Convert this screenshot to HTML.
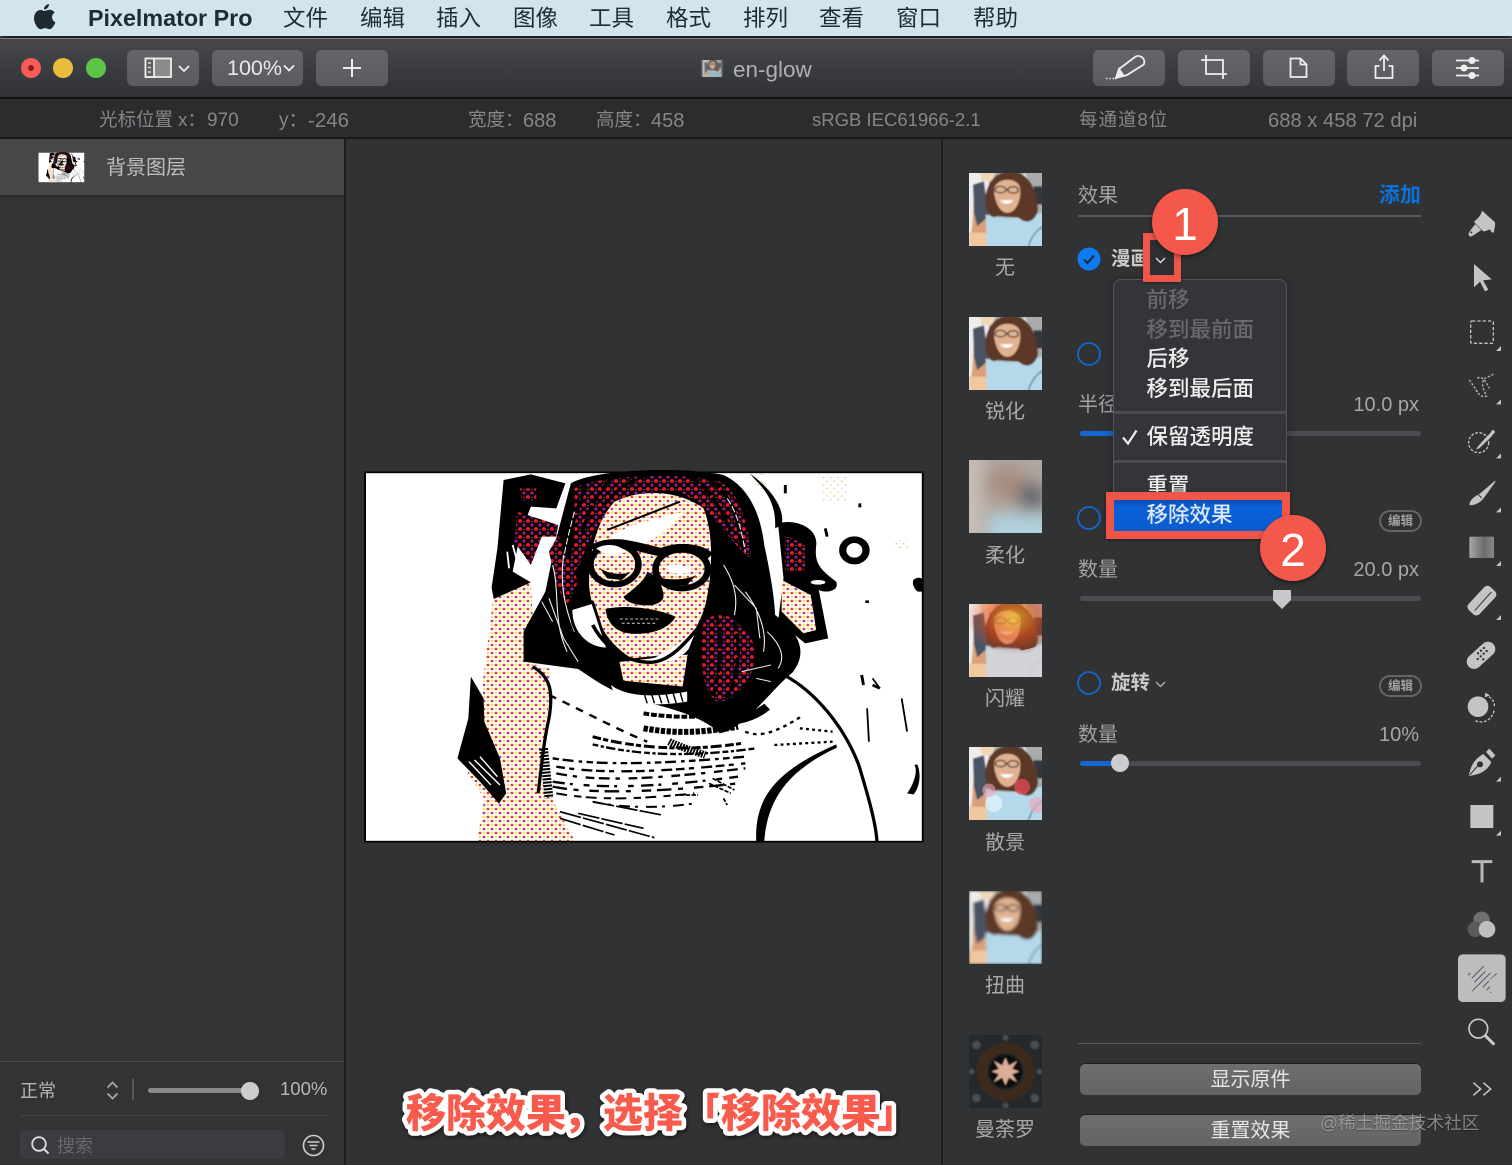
<!DOCTYPE html>
<html lang="zh"><head><meta charset="utf-8"><title>Pixelmator Pro</title>
<style>
html,body{margin:0;padding:0;background:#313234}
body{position:relative;width:1512px;height:1165px;overflow:hidden;font-family:"Liberation Sans","Noto Sans CJK SC",sans-serif}
.b{position:absolute}
.t{position:absolute;white-space:nowrap;line-height:1}
.btn{position:absolute;top:50px;height:36px;background:linear-gradient(#636568,#595b5e);border-radius:6px}
.m{font-size:22.5px;color:#1f2c35;top:8px}
.s{font-size:18.5px;color:#858688;top:110.5px}
.l{font-size:20px;color:#a8a9aa;text-align:center;left:965px;width:80px}
.th{position:absolute;left:969px;width:73px;height:73px}
.v{font-size:20px;color:#a5a6a8;right:93px}
.h{font-size:20px;color:#a2a3a5;left:1078px}
.mi{font-size:21.5px;left:1146.5px;color:#eeeeef;font-weight:500}
.dis{color:#68696b}
.sl{position:absolute;left:1080px;width:341px;height:5px;background:#4b4c4f;border-radius:3px}
.pill{position:absolute;left:1379px;width:39px;height:18px;border:2px solid #646567;border-radius:11px;color:#a0a1a3;font-size:12.5px;font-weight:700;line-height:18px;text-align:center}
.gb{position:absolute;left:1080px;width:341px;height:31px;background:linear-gradient(#6d6e70,#636466);border-radius:5px;box-shadow:0 -1px 0 #1e1f21;color:#e6e6e7;font-size:20px;line-height:33px;text-align:center}
.num{position:absolute;width:66px;height:66px;border-radius:50%;background:#f4584a;box-shadow:0 2px 5px rgba(0,0,0,.45);color:#fff;font-size:46px;line-height:70px;text-align:center}
</style></head><body>

<svg width="0" height="0" style="position:absolute">
<defs>
<pattern id="skin" width="22" height="24" patternUnits="userSpaceOnUse">
<rect width="22" height="24" fill="#fffdf0"/>
<circle cx="0" cy="0" r="3.800" fill="#e2352f"/><circle cx="22" cy="0" r="3.800" fill="#e2352f"/><circle cx="0" cy="24" r="3.800" fill="#e2352f"/><circle cx="22" cy="24" r="3.800" fill="#e2352f"/>
<circle cx="11" cy="12" r="3.800" fill="#b5309a"/>
<circle cx="11" cy="0" r="3.800" fill="#fbdf70"/><circle cx="11" cy="24" r="3.800" fill="#fbdf70"/><circle cx="0" cy="12" r="3.800" fill="#fbdf70"/><circle cx="22" cy="12" r="3.800" fill="#fbdf70"/>
</pattern>
<pattern id="hair" width="22" height="24" patternUnits="userSpaceOnUse">
<rect width="22" height="24" fill="#0c0208"/>
<circle cx="0" cy="0" r="5.500" fill="#e01a2a"/><circle cx="22" cy="0" r="5.500" fill="#e01a2a"/><circle cx="0" cy="24" r="5.500" fill="#e01a2a"/><circle cx="22" cy="24" r="5.500" fill="#e01a2a"/>
<circle cx="11" cy="12" r="4.500" fill="#9a1e8a"/><circle cx="11" cy="0" r="2" fill="#e8d070"/>
</pattern>
<pattern id="tiny" width="20" height="22" patternUnits="userSpaceOnUse"><circle cx="5" cy="5" r="3" fill="#f4dc90"/><circle cx="15" cy="16" r="2.500" fill="#e8c0d0"/></pattern>
<symbol id="comic" viewBox="0 0 1568 1155" preserveAspectRatio="none">
<rect x="14" y="22" width="1534" height="1108" fill="#fff"/>
<rect x="1270" y="30" width="70" height="80" fill="url(#tiny)"/>
<rect x="1090" y="25" width="20" height="50" fill="url(#tiny)"/>
<rect x="1470" y="225" width="40" height="25" fill="url(#tiny)"/>
<path d="M370 372 470 355 482 600 525 612 512 800 500 950 535 1015 592 1130H322L342 1000 296 925 340 800 338 650Z" fill="url(#skin)"/>
<path d="M305 635 340 700 342 770 385 880 402 985 382 1016 330 950 268 880 298 760Z" fill="#000"/>
<path d="M315 885 385 960M330 875 378 935M300 890l60 70" stroke="#fff" stroke-width="4" fill="none"/>
<path d="M395 45 470 28 565 55 540 130 470 125 440 210 420 320 470 352 368 402 362 368 378 250Z" fill="#000"/>
<path d="M432 140 545 180 540 215 500 215 470 300 425 230Z" fill="url(#hair)"/>
<path d="M440 70h45v36h-40Z" fill="url(#hair)"/>
<path d="M420 240l15 60M405 260l5 50" stroke="#fff" stroke-width="5" fill="none"/>
<path d="M580 55C650 10 900 5 1000 30 1060 60 1100 130 1112 240 1130 330 1140 400 1142 450 1205 500 1235 560 1190 622 1125 680 1060 790 990 805 950 760 860 730 780 710 700 690 640 640 600 612L450 590 450 500 510 380 540 220Z" fill="#000"/>
<path d="M590 70C650 30 900 20 990 50 1040 80 1070 170 1075 280 1020 240 970 130 880 80 760 60 640 150 610 290L570 350 590 210Z" fill="url(#hair)"/>
<path d="M945 470C990 430 1040 450 1080 530 1100 600 1060 700 985 712 950 690 930 620 945 470Z" fill="url(#hair)"/>
<path d="M520 260 545 210 600 350 570 420 540 360Z" fill="url(#hair)"/>
<g fill="none" stroke="#000" stroke-width="10">
<path d="M620 60C600 130 580 190 560 260M690 40C650 90 630 130 610 210M800 25C740 50 720 60 670 120M900 30C960 70 990 120 1020 200M960 40C1020 90 1040 150 1050 250" stroke-dasharray="40 8"/>
<path d="M980 450C1000 520 990 620 970 700M1030 470C1050 540 1040 640 1010 700" stroke-dasharray="30 6"/>
</g>
<g fill="none" stroke="#f0f0f0" stroke-width="3">
<path d="M1030 360 1090 430 1100 520M520 400 560 520 600 590M1050 620 1130 600M1060 380C1100 440 1120 500 1110 560M1000 300C1030 350 1040 400 1030 450M1120 500C1160 540 1170 580 1150 610"/>
<path d="M530 300C550 380 530 470 570 560M560 270C550 350 560 420 590 500M500 410 530 470M1090 640 1130 650"/>
<path d="M1010 100C1040 150 1050 200 1060 260M590 140C580 180 570 220 560 280" stroke-dasharray="20 7"/>
</g>
<path d="M700 110C780 68 880 78 945 130 972 200 972 320 950 420 920 530 860 585 770 592 700 560 640 480 630 360 630 260 650 170 700 110Z" fill="url(#skin)"/>
<path d="M710 588 905 565 890 668 722 650Z" fill="url(#skin)" stroke="#000" stroke-width="6"/>
<path d="M690 660C740 700 820 695 900 680L900 710C820 725 745 720 700 690Z" fill="#fff"/>
<path d="M780 680 790 715M800 680 810 715M820 680 830 715M840 680 850 715M860 680 870 715M880 680 888 710" stroke="#000" stroke-width="4"/>
<path d="M690 215C760 165 830 160 890 140 850 190 800 245 750 235 725 235 700 230 690 215Z" fill="#fff"/>
<path d="M680 195 880 110" stroke="#000" stroke-width="6"/>
<path d="M580 432 640 412 682 552C625 552 580 505 580 432Z" fill="#fff" stroke="#000" stroke-width="8"/>
<path d="M770 590C820 585 870 540 925 495L905 550C880 590 820 600 770 590Z" fill="#fff"/>
<path d="M640 480C680 560 740 592 800 592 850 590 890 540 925 495" stroke="#000" stroke-width="10" fill="none"/>
<ellipse cx="700" cy="298" rx="66" ry="60" fill="none" stroke="#000" stroke-width="18"/>
<ellipse cx="885" cy="312" rx="72" ry="58" fill="none" stroke="#000" stroke-width="18"/>
<path d="M640 252C700 215 770 250 830 262 880 240 940 250 962 275" stroke="#000" stroke-width="26" fill="none"/>
<path d="M650 250C680 232 720 240 730 262 700 272 670 270 650 250Z" fill="#fff"/>
<path d="M840 305C860 292 900 300 915 318 885 332 855 330 840 305Z" fill="#fff"/>
<path d="M660 310C690 330 730 330 745 320L720 345 680 340ZM830 340C860 345 900 345 925 330L900 360 850 362Z" fill="#000"/>
<path d="M725 395C755 370 785 345 790 320L825 340C828 380 855 405 805 420 775 425 730 415 725 395Z" fill="#000"/>
<path d="M675 432C730 418 820 430 868 455 850 495 790 512 740 505 700 500 680 470 675 432Z" fill="#000"/>
<path d="M715 462h110M720 475h95" stroke="#999" stroke-width="4" stroke-dasharray="8 6" fill="none"/>
<path d="M475 605C530 640 530 690 520 760 505 830 500 900 490 985M1170 632C1250 680 1330 780 1372 900 1400 1000 1420 1080 1422 1130" stroke="#000" stroke-width="9" fill="none"/>
<path d="M1090 1130C1085 1000 1140 920 1310 838L1312 848C1170 920 1120 1010 1112 1130Z" fill="#000"/>
<path d="M1395 730 1400 830M1490 700 1505 800M1410 640 1430 670" stroke="#000" stroke-width="5" fill="none"/>
<g fill="none" stroke="#000" stroke-linecap="butt">
<path d="M780 745C860 760 960 760 1110 735" stroke-width="12" stroke-dasharray="16 5"/>
<path d="M640 815C760 850 900 860 1050 835" stroke-width="9" stroke-dasharray="24 6 14 8 30 10"/>
<path d="M780 790C860 805 930 805 1040 785" stroke-width="18" stroke-dasharray="12 4"/>
<path d="M640 838C760 870 900 878 1090 850" stroke-width="7" stroke-dasharray="16 7 9 6 26 8"/>
<path d="M850 830C880 845 920 860 950 870" stroke-width="22" stroke-dasharray="5 3"/>
<path d="M530 880C650 900 800 900 1060 875" stroke-width="7" stroke-dasharray="18 10 30 14 10 12"/>
<path d="M540 905C650 925 800 925 1060 895" stroke-width="7" stroke-dasharray="24 12 14 20 30 10"/>
<path d="M540 925C650 950 800 945 1060 910" stroke-width="7" stroke-dasharray="30 16 12 24 24 12"/>
<path d="M530 950C650 970 800 970 1040 935" stroke-width="7" stroke-dasharray="34 14 8 30 16 20"/>
<path d="M530 965C620 985 800 985 1040 955" stroke-width="7" stroke-dasharray="40 18 14 30 26 16"/>
<path d="M540 985C640 1005 750 1005 920 985" stroke-width="6" stroke-dasharray="30 20 20 12"/>
<path d="M640 1010C720 1030 830 1030 920 1015" stroke-width="6" stroke-dasharray="30 14 8 22"/>
<path d="M550 1040 810 1118M600 1045 780 1090M640 1010 830 1050M550 1060 700 1110" stroke-width="5" stroke-dasharray="60 6"/>
<path d="M520 690C600 730 700 790 790 830" stroke-width="7" stroke-dasharray="22 20"/>
<path d="M1060 800C1100 820 1150 800 1220 750" stroke-width="7" stroke-dasharray="10 12"/>
<path d="M1210 790 1300 800M1140 840 1300 830" stroke-width="7" stroke-dasharray="8 9"/>
<path d="M950 760C1020 780 1080 760 1120 725" stroke-width="24"/>
<path d="M505 850 520 1000" stroke-width="24" stroke-dasharray="6 4"/>
<path d="M970 940 1030 975M960 955 1020 985M1000 1000l10 20M880 990h50" stroke-width="5" stroke-dasharray="12 4"/>
</g>
<path d="M1072 25C1130 70 1170 130 1160 180L1142 190C1145 120 1120 80 1088 45Z" fill="#000"/>
<path d="M1150 175C1200 160 1260 190 1255 240 1250 290 1260 310 1310 350 1320 380 1280 385 1262 375L1288 520 1225 535 1150 470 1165 340Z" fill="#000"/>
<path d="M1170 210 1225 240 1225 320 1170 320Z" fill="url(#hair)"/>
<path d="M1160 345 1240 390 1255 495 1220 505 1160 440Z" fill="url(#skin)"/>
<ellipse cx="1260" cy="352" rx="20" ry="7" fill="#fff"/>
<ellipse cx="1360" cy="256" rx="32" ry="32" fill="#fff" stroke="#000" stroke-width="20"/>
<path d="M1170 60v25M1280 190l5 25M1375 115v12M1390 410h10M1380 630l5 30M1410 660l20 10" stroke="#000" stroke-width="8" fill="none"/>
<path d="M1522 345c12-12 26-6 26 0v35h-14c-8-8-16-20-12-35ZM1505 985c20-30 30-70 20-85l8-2c12 30 6 70-10 90Z" fill="#000"/>
<rect x="14" y="22" width="1534" height="1108" fill="none" stroke="#000" stroke-width="5"/>
</symbol>
<symbol id="face" viewBox="0 0 220 220">
<g filter="url(#bl0)">
<rect x="-10" y="-10" width="240" height="240" fill="#a9abad"/>
<rect x="-10" y="-10" width="70" height="240" fill="#efeeee"/>
<path d="M165 -5 195 50 215 80 180 150 150 110Z" fill="#eee"/>
<path d="M195 40h30v55h-30z" fill="#33373c"/>
<path d="M15 70h30l25 60-5 95H0l10-70Z" fill="#dca078"/>
<path d="M12 35 45 25 60 130 25 160 15 120Z" fill="#4a5263"/>
<path d="M0 180h60v45H0Z" fill="#efc8a0"/>
<path d="M30 -5h50l-10 30H40Z" fill="#efd8b8"/>
<path d="M50 125C100 140 170 140 230 115V230H55Z" fill="#b4d9ea"/>
<path d="M178 225C188 190 205 170 225 160" stroke="#537f96" stroke-width="4" fill="none"/>
<path d="M50 95C45 40 75 -5 125 -5 180 -5 205 50 208 110 200 150 170 155 150 135L85 130C70 140 55 125 50 95Z" fill="#5c3826"/>
<path d="M76 45C88 12 146 12 154 45 158 85 140 120 115 120 92 120 74 82 76 45Z" fill="#e0b292"/>
<ellipse cx="95" cy="50" rx="16" ry="10" fill="none" stroke="#231d1d" stroke-width="3.500"/>
<ellipse cx="133" cy="51" rx="16" ry="10" fill="none" stroke="#231d1d" stroke-width="3.500"/>
<path d="M110 50h8" stroke="#231d1d" stroke-width="3.500"/>
<path d="M94 82C104 96 124 96 134 82Z" fill="#fff"/>
</g>
</symbol>
<filter id="bl0" x="-5%" y="-5%" width="110%" height="110%"><feGaussianBlur stdDeviation="2.5"/></filter>
<filter id="bl1" x="0" y="0" width="100%" height="100%"><feGaussianBlur stdDeviation="4"/></filter>
<filter id="bl2" x="-20%" y="-20%" width="140%" height="140%"><feGaussianBlur stdDeviation="24"/></filter>
<radialGradient id="flare" cx=".6" cy=".25" r=".65"><stop offset="0" stop-color="#f6c62e" stop-opacity=".75"/><stop offset=".55" stop-color="#e8501f" stop-opacity=".55"/><stop offset="1" stop-color="#e8501f" stop-opacity="0"/></radialGradient>
<linearGradient id="gr" x1="0" x2="1"><stop offset="0" stop-color="#a8a8aa"/><stop offset=".6" stop-color="#6a6b6d"/><stop offset="1" stop-color="#88898b"/></linearGradient>
<clipPath id="star"><path d="M95 875 108 907 143 910 116 932 125 972 95 950 65 972 74 932 47 910 82 907Z"/></clipPath>
</defs>
</svg>

<!-- menu bar -->
<div class="b" style="left:0;top:0;width:1512px;height:36px;background:#d2e5ee"></div>
<svg class="b" style="left:33px;top:3px" width="24" height="27" viewBox="0 0 24 27"><path d="M16 1c.3 2.500-2 5.500-5 5.500C10.700 4 13 1.500 16 1ZM11.500 8c1.300 0 2.800-1.200 5-1.200 2 0 4 1 5.200 2.800-4 2.400-3.200 8 .8 9.600-1.200 3-3.500 7-6 7-1.700 0-2.400-1.100-4.400-1.100s-2.800 1.100-4.400 1.100C4.500 26.200 1 20 1 15.300 1 10.500 4 7 7.500 7c1.700 0 3 1 4 1Z" fill="#1e2a30"/></svg>
<div class="t" style="left:88px;top:7px;font-size:23.3px;font-weight:700;color:#1e2c36">Pixelmator Pro</div>
<div class="t m" style="left:283px">文件</div><div class="t m" style="left:360px">编辑</div><div class="t m" style="left:436px">插入</div><div class="t m" style="left:513px">图像</div><div class="t m" style="left:589px">工具</div><div class="t m" style="left:666px">格式</div><div class="t m" style="left:743px">排列</div><div class="t m" style="left:819px">查看</div><div class="t m" style="left:896px">窗口</div><div class="t m" style="left:973px">帮助</div>

<!-- toolbar -->
<div class="b" style="left:0;top:36px;width:1512px;height:62px;background:linear-gradient(#46484b,#303134);border-top:2px solid #1f2023;box-sizing:border-box;border-radius:6px 6px 0 0"></div>
<div class="b" style="left:0;top:38px;width:1512px;height:1px;background:#77797d"></div>
<div class="b" style="left:0;top:97px;width:1512px;height:2px;background:#151517"></div>
<div class="b" style="left:21px;top:58px;width:20px;height:20px;border-radius:50%;background:#f55b58"></div>
<div class="b" style="left:28px;top:65px;width:6px;height:6px;border-radius:50%;background:#8f1a1a"></div>
<div class="b" style="left:53px;top:58px;width:20px;height:20px;border-radius:50%;background:#e8bd3c"></div>
<div class="b" style="left:86px;top:58px;width:20px;height:20px;border-radius:50%;background:#5bc545"></div>

<div class="btn" style="left:127px;width:72px"></div>
<div class="btn" style="left:212px;width:91px"></div>
<div class="btn" style="left:316px;width:72px"></div>
<div class="btn" style="left:1093px;width:72px"></div>
<div class="btn" style="left:1178px;width:72px"></div>
<div class="btn" style="left:1263px;width:72px"></div>
<div class="btn" style="left:1347px;width:72px"></div>
<div class="btn" style="left:1432px;width:72px"></div>
<div class="t" style="left:227px;top:58px;font-size:21.5px;color:#e8e8e9">100%</div>

<svg class="b" style="left:0;top:36px" width="1512" height="62" viewBox="0 36 1512 62" fill="none" stroke="#eee" stroke-width="1.800">
<rect x="145.500" y="58.500" width="25.500" height="18.500" fill="#8a8b8d"/>
<rect x="145.500" y="58.500" width="8.500" height="18.500" fill="#5d5f62"/>
<path d="M148 63h3M148 67.500h3M148 72h3" stroke-width="1.500" stroke="#ddd"/>
<path d="M179 66l5 5 5-5M284 65.500l5 5 5-5"/>
<path d="M352 59v18M343 68h18" stroke-width="2"/>
<path d="M1106 78.500h1.500M1109.500 78.500h1.500M1112.500 78.500h1.500" stroke-width="1.500"/>
<path d="M1116 78l3-9 16-12c4-3 11 1 9 7l-1 1-16 10-11 3Z"/><path d="M1116 78l3-9 4 6Z" fill="#eee"/>
<path d="M1206 55v19h21M1201 60h22v19" stroke-width="1.800"/>
<path d="M1290.500 58.500h10l6 6v12.500h-16ZM1300.500 58.500v6h6"/>
<path d="M1379.500 66h-4v12h17V66h-4M1384 56v15M1379.500 60.500l4.500-5 4.500 5"/>
<path d="M1456 60.500h23M1456 68h23M1456 75.500h23"/>
<circle cx="1472" cy="60.500" r="2.600" fill="#eee"/><circle cx="1464" cy="68" r="2.600" fill="#eee"/><circle cx="1472" cy="75.500" r="2.600" fill="#eee"/>
</svg>
<svg class="b" style="left:701px;top:60px" width="22" height="17" viewBox="0 0 220 170" preserveAspectRatio="none"><use href="#face" width="220" height="170"/><rect width="220" height="170" fill="#8a8b8d" opacity=".45"/></svg>
<div class="t" style="left:733px;top:59px;font-size:22.5px;color:#aeafb1">en-glow</div>

<!-- status -->
<div class="b" style="left:0;top:99px;width:1512px;height:38px;background:#2b2c2e"></div>
<div class="b" style="left:0;top:137px;width:1512px;height:2px;background:#17181a"></div>
<div class="t s" style="left:99px">光标位置 x：</div><div class="t s" style="left:207px;font-size:19px">970</div>
<div class="t s" style="left:279px;font-size:19px">y：</div><div class="t s" style="left:308px;font-size:20.5px">-246</div>
<div class="t s" style="left:468px">宽度：</div><div class="t s" style="left:523px;font-size:20px">688</div>
<div class="t s" style="left:596px">高度：</div><div class="t s" style="left:651px;font-size:20px">458</div>
<div class="t s" style="left:812px">sRGB IEC61966-2.1</div>
<div class="t s" style="left:1079px;letter-spacing:1px">每通道8位</div>
<div class="t s" style="left:1268px;font-size:20.2px">688 x 458 72 dpi</div>

<!-- panels -->
<div class="b" style="left:0;top:139px;width:344px;height:1026px;background:#323335"></div>
<div class="b" style="left:344px;top:139px;width:2px;height:1026px;background:#1c1d1f"></div>
<div class="b" style="left:941px;top:139px;width:2px;height:1026px;background:#1c1d1f"></div>
<div class="b" style="left:0;top:139px;width:344px;height:56px;background:#464749"></div>
<div class="b" style="left:0;top:195px;width:344px;height:2px;background:#2a2b2d"></div>
<svg class="b" style="left:38px;top:152px" width="47" height="31" viewBox="0 0 1568 1155" preserveAspectRatio="none"><use href="#comic" width="1568" height="1155"/></svg>
<div class="t" style="left:106px;top:158px;font-size:20px;color:#bcbdbe">背景图层</div>

<!-- bottom left -->
<div class="b" style="left:0;top:1061px;width:344px;height:1px;background:#4a4b4e"></div>
<div class="t" style="left:20px;top:1082px;font-size:18px;color:#b5b6b7">正常</div>
<svg class="b" style="left:105px;top:1080px" width="15" height="21" fill="none" stroke="#a5a6a8" stroke-width="1.800"><path d="M2.500 7.500 7.500 2.500l5 5M2.500 13.500l5 5 5-5"/></svg>
<div class="b" style="left:132px;top:1079px;width:2px;height:21px;background:#58595b"></div>
<div class="b" style="left:148px;top:1088px;width:100px;height:5px;background:#8b8c8e;border-radius:3px"></div>
<div class="b" style="left:241px;top:1082px;width:18px;height:18px;border-radius:50%;background:#cbccce"></div>
<div class="t" style="left:280px;top:1080px;font-size:18.5px;color:#b5b6b7">100%</div>
<div class="b" style="left:20px;top:1115px;width:308px;height:1px;background:#444548"></div>
<div class="b" style="left:20px;top:1130px;width:265px;height:29px;background:#3b3c3f;border-radius:5px"></div>
<svg class="b" style="left:29px;top:1135px" width="22" height="20" fill="none" stroke="#dcdcdd" stroke-width="1.800"><circle cx="10" cy="9" r="6.800"/><path d="M15 14l4.500 4.500" stroke-width="2"/></svg>
<div class="t" style="left:57px;top:1137px;font-size:18px;color:#68696b">搜索</div>
<svg class="b" style="left:302px;top:1134px" width="23" height="23" fill="none" stroke="#cfcfd0" stroke-width="1.600"><circle cx="11.500" cy="11.500" r="10"/><path d="M5.500 8h12M7.500 11.500h8M9.500 15h4"/></svg>

<!-- picture -->
<svg class="b" style="left:360px;top:465px" width="570" height="385" viewBox="0 0 1568 1155" preserveAspectRatio="none"><use href="#comic" width="1568" height="1155"/></svg>

<!-- caption -->
<svg class="b" style="left:390px;top:1075px" width="530" height="80" viewBox="390 1075 530 80">
<defs><filter id="cs" x="-5%" y="-20%" width="110%" height="150%"><feDropShadow dx="1" dy="2" stdDeviation="2" flood-color="#000" flood-opacity=".55"/></filter></defs>
<g font-family="'Liberation Sans','Noto Sans CJK SC',sans-serif" font-size="40" font-weight="900" fill="#f85a4c" stroke="#fff" stroke-width="9" stroke-linejoin="round" paint-order="stroke" filter="url(#cs)">
<text x="406" y="1127">移除效果</text><text x="563" y="1127">，</text>
<text x="603" y="1127">选择</text>
<text x="682" y="1127">「</text><text x="721" y="1127">移除效果</text><text x="877" y="1127">」</text>
</g></svg>

<!-- thumbnails -->
<svg class="th" style="top:173px"><use href="#face" width="73" height="73"/></svg>
<svg class="th" style="top:317px"><use href="#face" width="73" height="73"/></svg>
<svg class="th" style="top:460px" viewBox="0 0 220 220"><rect width="220" height="220" fill="#a89c98"/><g filter="url(#bl2)"><rect x="-40" y="-40" width="300" height="300" fill="#b0a7a3"/><ellipse cx="115" cy="70" rx="65" ry="55" fill="#a88e80"/><ellipse cx="190" cy="110" rx="45" ry="45" fill="#62676d"/><path d="M60 165h200v90H60Z" fill="#b0d2de"/><path d="M-40 -40h75v300H-40Z" fill="#c9bfb6"/></g></svg>
<svg class="th" style="top:604px" viewBox="0 0 220 220"><use href="#face" width="220" height="220"/><path d="M55 130C100 150 170 145 220 120V220H55Z" fill="#d6d3d6" opacity=".88"/><rect x="0" width="220" height="170" fill="url(#flare)"/></svg>
<svg class="th" style="top:747px" viewBox="0 0 220 220"><use href="#face" width="220" height="220"/><circle cx="75" cy="170" r="26" fill="#e2f2fb" opacity=".75"/><circle cx="160" cy="120" r="24" fill="#e84a5a" opacity=".75"/><circle cx="205" cy="175" r="24" fill="#f0a8bc" opacity=".65"/><circle cx="60" cy="130" r="20" fill="#f2a5b0" opacity=".6"/></svg>
<svg class="th" style="top:891px" viewBox="0 0 220 220"><use href="#face" width="220" height="220" filter="url(#bl1)"/></svg>
<svg class="th" style="top:1035px" viewBox="0 0 220 220"><rect width="220" height="220" fill="#26292b"/><g filter="url(#bl0)"><circle cx="110" cy="110" r="72" fill="none" stroke="#3e2a1e" stroke-width="30"/><circle cx="110" cy="110" r="50" fill="#0a0908"/><path d="M110 68 120 92 145 78 130 102 152 110 130 118 145 142 120 128 110 152 100 128 75 142 90 118 68 110 90 102 75 78 100 92Z" fill="#dcae98"/><g fill="#4a4e50"><circle cx="22" cy="30" r="13"/><circle cx="198" cy="30" r="13"/><circle cx="22" cy="190" r="13"/><circle cx="198" cy="190" r="13"/><circle cx="110" cy="8" r="9"/><circle cx="110" cy="212" r="9"/><circle cx="8" cy="110" r="9"/><circle cx="212" cy="110" r="9"/></g></g></svg>
<div class="t l" style="top:258px">无</div><div class="t l" style="top:402px">锐化</div><div class="t l" style="top:546px">柔化</div><div class="t l" style="top:689px">闪耀</div><div class="t l" style="top:833px">散景</div><div class="t l" style="top:976px">扭曲</div><div class="t l" style="top:1120px">曼荼罗</div>

<!-- effects panel -->
<div class="t h" style="top:186px">效果</div>
<div class="t" style="left:1379px;top:185px;font-size:21px;font-weight:700;color:#0b72dc">添加</div>
<div class="b" style="left:1078px;top:215px;width:343px;height:2px;background:#57585a"></div>

<svg class="b" style="left:1076px;top:246px" width="26" height="26"><circle cx="13" cy="13" r="11.500" fill="#0e7af0"/><path d="M8 13.500l3.500 3.500 6.500-7.500" stroke="#1c2730" stroke-width="2" fill="none"/></svg>
<div class="t" style="left:1111px;top:250px;font-size:19.5px;font-weight:700;color:#c9cacb">漫画</div>
<svg class="b" style="left:1076px;top:341px" width="26" height="26"><circle cx="13" cy="13" r="11" fill="none" stroke="#0f6ad0" stroke-width="1.800"/></svg>
<svg class="b" style="left:1076px;top:505px" width="26" height="26"><circle cx="13" cy="13" r="11" fill="none" stroke="#0f6ad0" stroke-width="1.800"/></svg>
<svg class="b" style="left:1076px;top:670px" width="26" height="26"><circle cx="13" cy="13" r="11" fill="none" stroke="#0f6ad0" stroke-width="1.800"/></svg>

<div class="t h" style="top:395px">半径</div>
<div class="t v" style="top:395px">10.0 px</div>
<div class="sl" style="top:431px"></div>
<div class="b" style="left:1080px;top:431px;width:36px;height:5px;background:#1468cf;border-radius:3px"></div>

<div class="pill" style="top:510px">编辑</div>
<div class="t h" style="top:560px">数量</div>
<div class="t v" style="top:560px">20.0 px</div>
<div class="sl" style="top:596px"></div>
<svg class="b" style="left:1272px;top:589px" width="20" height="21"><path d="M2 1h16a1 1 0 0 1 1 1v9l-9 9-9-9V2a1 1 0 0 1 1-1Z" fill="#c6c7c9"/></svg>

<div class="t" style="left:1111px;top:674px;font-size:19.5px;font-weight:700;color:#c9cacb">旋转</div>
<svg class="b" style="left:1154px;top:679px" width="13" height="10" fill="none" stroke="#aaabac" stroke-width="1.500"><path d="M2 3l4.500 4.500L11 3"/></svg>
<div class="pill" style="top:675px">编辑</div>
<div class="t h" style="top:725px">数量</div>
<div class="t v" style="top:725px">10%</div>
<div class="sl" style="top:761px"></div>
<div class="b" style="left:1080px;top:761px;width:40px;height:5px;background:#1468cf;border-radius:3px"></div>
<div class="b" style="left:1111px;top:754px;width:18px;height:18px;border-radius:50%;background:#cbccce"></div>

<div class="b" style="left:1078px;top:1043px;width:343px;height:1px;background:#5a5b5d"></div>
<div class="gb" style="top:1064px">显示原件</div>
<div class="gb" style="top:1115px">重置效果</div>
<div class="t" style="left:1320px;top:1115px;font-size:17.7px;color:rgba(190,190,192,.62);text-shadow:0 1px 1px rgba(0,0,0,.35)">@稀土掘金技术社区</div>

<!-- popup menu -->
<div class="b" style="left:1113px;top:279px;width:174px;height:240px;background:#343538;border:1px solid #55565a;box-sizing:border-box;border-radius:8px;box-shadow:0 3px 10px rgba(0,0,0,.35)"></div>
<div class="t mi dis" style="top:290px">前移</div>
<div class="t mi dis" style="top:320px">移到最前面</div>
<div class="t mi" style="top:349px">后移</div>
<div class="t mi" style="top:379px">移到最后面</div>
<div class="b" style="left:1114px;top:411px;width:172px;height:3px;background:#4b4c4f"></div>
<svg class="b" style="left:1121px;top:428px" width="18" height="18" fill="none" stroke="#eee" stroke-width="2.200"><path d="M2 9.500l5 6L15.500 2.500"/></svg>
<div class="t mi" style="top:427px">保留透明度</div>
<div class="b" style="left:1114px;top:460px;width:172px;height:3px;background:#4b4c4f"></div>
<div class="t mi" style="top:476px">重置</div>

<!-- red annotations -->
<div class="b" style="left:1143px;top:233px;width:38px;height:49px;box-sizing:border-box;border:7px solid #ef5548;background:#2e2f32;box-shadow:0 1px 3px rgba(0,0,0,.4)"></div>
<svg class="b" style="left:1154px;top:255px" width="13" height="10" fill="none" stroke="#d5d5d6" stroke-width="1.500"><path d="M2 3l4.500 4.500L11 3"/></svg>
<div class="num" style="left:1152px;top:189px">1</div>
<div class="b" style="left:1106px;top:492px;width:184px;height:47px;box-sizing:border-box;border:8px solid #ef5548;background:linear-gradient(#0a4fb0,#0a60d8 25%,#0a5cd0);box-shadow:0 1px 3px rgba(0,0,0,.4)"></div>
<div class="t mi" style="top:505px;color:#dfe8f5">移除效果</div>
<div class="num" style="left:1260px;top:515px">2</div>

<!-- tools -->
<svg class="b" style="left:1450px;top:190px;overflow:visible" width="62" height="480" viewBox="0 0 186 1440">
<g fill="#c3c4c6">
<path d="M96 62l38 34c4 8-2 22-2 30-6 6-10-4-12-8-8 2-12 6-20 6L72 96c6-8 20-14 24-34Z"/><path d="M76 102l18 18-24 16c-6 6-16 4-14-6 2-6 14-20 20-28Zm-12 22a3 3 0 1 0 .1 0Z"/>
<path d="M72 222l53 46-26 3 16 28-10 5-15-29-18 17Z"/>
<path d="M58 945c2-20 22-28 34-36l42-36c2-2 3 0 1 4l-30 42c-10 16-28 28-47 26Z"/>
<rect x="58" y="1040" width="74" height="64" rx="4" fill="url(#gr)"/>
<rect x="48" y="1210" width="95" height="45" rx="13" transform="rotate(-47 95 1232)"/>
<rect x="43" y="1374" width="100" height="44" rx="22" transform="rotate(-42 93 1396)"/>
<path d="M153 468v15h-15ZM153 628v15h-15ZM153 790v15h-15ZM153 952v15h-15ZM153 1113v15h-15ZM153 1275v15h-15Z"/>
</g>
<path d="M74 1262l50-56" stroke="#303134" stroke-width="3" fill="none"/>
<path d="M83 912l12 12" stroke="#303134" stroke-width="3" fill="none"/>
<g fill="#303134"><circle cx="84" cy="1390" r="3.500"/><circle cx="93" cy="1382" r="3.500"/><circle cx="102" cy="1374" r="3.500"/><circle cx="92" cy="1399" r="3.500"/><circle cx="101" cy="1391" r="3.500"/><circle cx="110" cy="1383" r="3.500"/><circle cx="83" cy="1407" r="3.500"/><circle cx="100" cy="1408" r="3.500"/></g>
<rect x="62" y="393" width="68" height="67" rx="4" fill="none" stroke="#c3c4c6" stroke-width="4" stroke-dasharray="10 6"/>
<g fill="none" stroke="#b5b6b8" stroke-width="4" stroke-dasharray="7 5">
<path d="M58 570l30 44M82 565c14-10 26 10 36 30M130 552c-10 10-24 6-30 20-6 14 2 30 10 46-14 6-28-6-36-26"/>
</g>
<g fill="none" stroke="#c3c4c6"><circle cx="86" cy="758" r="30" stroke-width="4" stroke-dasharray="8 5"/></g>
<path d="M82 770l30-34c2-2 6-4 8-8l4-6c4-8 16 2 10 8l-6 6c-2 2-4 6-6 8l-34 32-12 4Z" fill="#c3c4c6" stroke="#303134" stroke-width="2"/>
</svg>
<svg class="b" style="left:1450px;top:670px" width="62" height="450" viewBox="0 0 186 1350">
<rect x="24" y="853" width="143" height="143" rx="14" fill="#bcbdbf"/>
<circle cx="84" cy="110" r="31" fill="#c3c4c6"/>
<path d="M105 75c18 4 30 20 28 36M132 122c-4 20-20 34-40 34-8 0-14-2-18-6" fill="none" stroke="#c3c4c6" stroke-width="4" stroke-dasharray="8 5"/>
<path d="M106 68l14 8-16 6Z" fill="#c3c4c6"/>
<path d="M56 318c6-30 16-50 44-66l24 24c-12 28-36 38-68 42Zm34-44a9 9 0 1 0 .1 0ZM108 246l10-10 18 20-10 10Z" fill="#c3c4c6"/>
<path d="M58 316l30-34" stroke="#303134" stroke-width="3"/>
<rect x="61" y="405" width="69" height="69" fill="#c3c4c6"/>
<path d="M65 575h62M96 575v62" stroke="#b8b9bb" stroke-width="9" fill="none"/>
<circle cx="95" cy="750" r="25" fill="#6e6f71"/><circle cx="76" cy="778" r="23" fill="#5a5b5d"/><circle cx="111" cy="778" r="25" fill="#bebfc1"/>
<path d="M153 320v15h-15ZM153 482v15h-15Z" fill="#c3c4c6"/>
<g clip-path="url(#star)" stroke="#55565a" stroke-width="3" fill="none">
<path d="M30 940 110 860M40 950 120 870M50 960 130 880M60 970 140 890M70 980 150 900M80 990 160 910M90 1000 170 920"/>
</g>
<circle cx="85" cy="1076" r="28" fill="none" stroke="#c9cacb" stroke-width="5"/>
<path d="M106 1097l24 24" stroke="#c9cacb" stroke-width="9" stroke-linecap="round"/>
<path d="M70 1238l22 19-22 19M100 1238l22 19-22 19" fill="none" stroke="#c9cacb" stroke-width="4.500"/>
</svg>
</body></html>
